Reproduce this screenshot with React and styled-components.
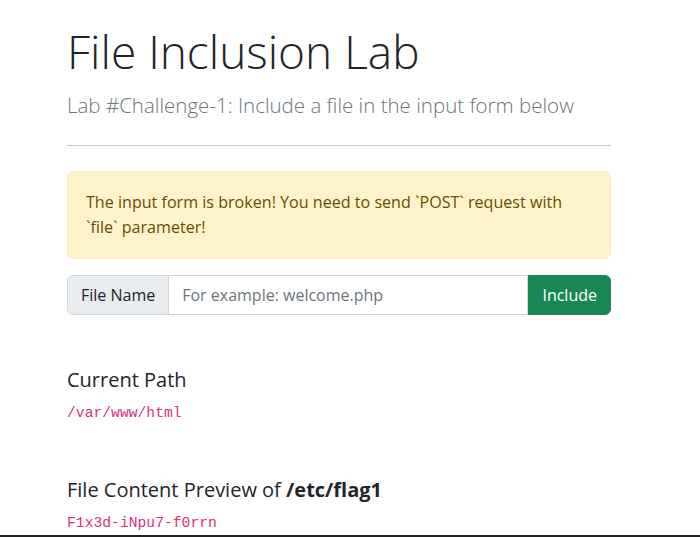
import styled, { createGlobalStyle } from "styled-components";

const GlobalStyle = createGlobalStyle`
  html, body {
    margin: 0;
    padding: 0;
    background: #fff;
  }
  body {
    font-family: "Open Sans", "Noto Sans", sans-serif;
    color: #212529;
    -webkit-font-smoothing: antialiased;
  }
`;

const App = () => {
  return (
    <>
      <GlobalStyle />
      <Page>
        <Container>
          <Title>File Inclusion Lab</Title>
          <Lead>Lab #Challenge-1: Include a file in the input form below</Lead>
          <Divider />
          <Alert>
            The input form is broken! You need to send `POST` request with
            `file` parameter!
          </Alert>
          <InputGroup>
            <Addon>File Name</Addon>
            <TextInput placeholder="For example: welcome.php" />
            <Button>Include</Button>
          </InputGroup>
          <Section>
            <Heading>Current Path</Heading>
            <Code>/var/www/html</Code>
          </Section>
          <Section>
            <Heading>
              File Content Preview of <strong>/etc/flag1</strong>
            </Heading>
            <Code>F1x3d-iNpu7-f0rrn</Code>
          </Section>
        </Container>
      </Page>
    </>
  );
};

export default App;

const Page = styled.div`
  box-sizing: border-box;
  height: 537px;
  overflow: hidden;
  border-bottom: 2px solid #222;
`;

const Container = styled.div`
  width: 544px;
  margin-left: 67px;
  padding-top: 24px;
`;

const Title = styled.h1`
  margin: 0;
  font-size: 46px;
  font-weight: 300;
  line-height: 1.2;
  color: #212529;
`;

const Lead = styled.p`
  margin: 11px 0 0;
  font-size: 20.5px;
  font-weight: 300;
  line-height: 1.5;
  color: #6c757d;
`;

const Divider = styled.hr`
  margin: 24px 0 25px;
  border: 0;
  border-top: 1px solid #c8c8c8;
`;

const Alert = styled.div`
  box-sizing: border-box;
  padding: 18px 18px;
  background: #fff3cd;
  border: 1px solid #ffecb5;
  border-radius: 6px;
  color: #664d03;
  font-size: 16.1px;
  line-height: 25px;
`;

const InputGroup = styled.div`
  display: flex;
  align-items: stretch;
  height: 40px;
  margin-top: 16px;
`;

const Addon = styled.span`
  display: flex;
  align-items: center;
  padding: 0 13px;
  background: #e9ecef;
  border: 1px solid #ced4da;
  border-radius: 6px 0 0 6px;
  font-size: 16px;
  color: #212529;
  white-space: nowrap;
`;

const TextInput = styled.input`
  flex: 1;
  min-width: 0;
  padding: 0 13px;
  border: 1px solid #ced4da;
  border-left: 0;
  font-family: inherit;
  font-size: 16px;
  color: #212529;
  outline: none;
  &::placeholder {
    color: #6c757d;
  }
`;

const Button = styled.button`
  padding: 0 13px;
  background: #198754;
  border: 1px solid #198754;
  border-radius: 0 6px 6px 0;
  color: #fff;
  font-family: inherit;
  font-size: 16px;
  cursor: pointer;
`;

const Section = styled.div`
  margin-top: 53px;
  & + & {
    margin-top: 57px;
  }
`;

const Heading = styled.h4`
  margin: 0;
  font-size: 20px;
  font-weight: 400;
  line-height: 1.2;
  strong {
    font-weight: 700;
  }
`;

const Code = styled.code`
  display: block;
  margin-top: 13px;
  font-family: "Liberation Mono", monospace;
  font-size: 14.7px;
  color: #d63384;
`;
